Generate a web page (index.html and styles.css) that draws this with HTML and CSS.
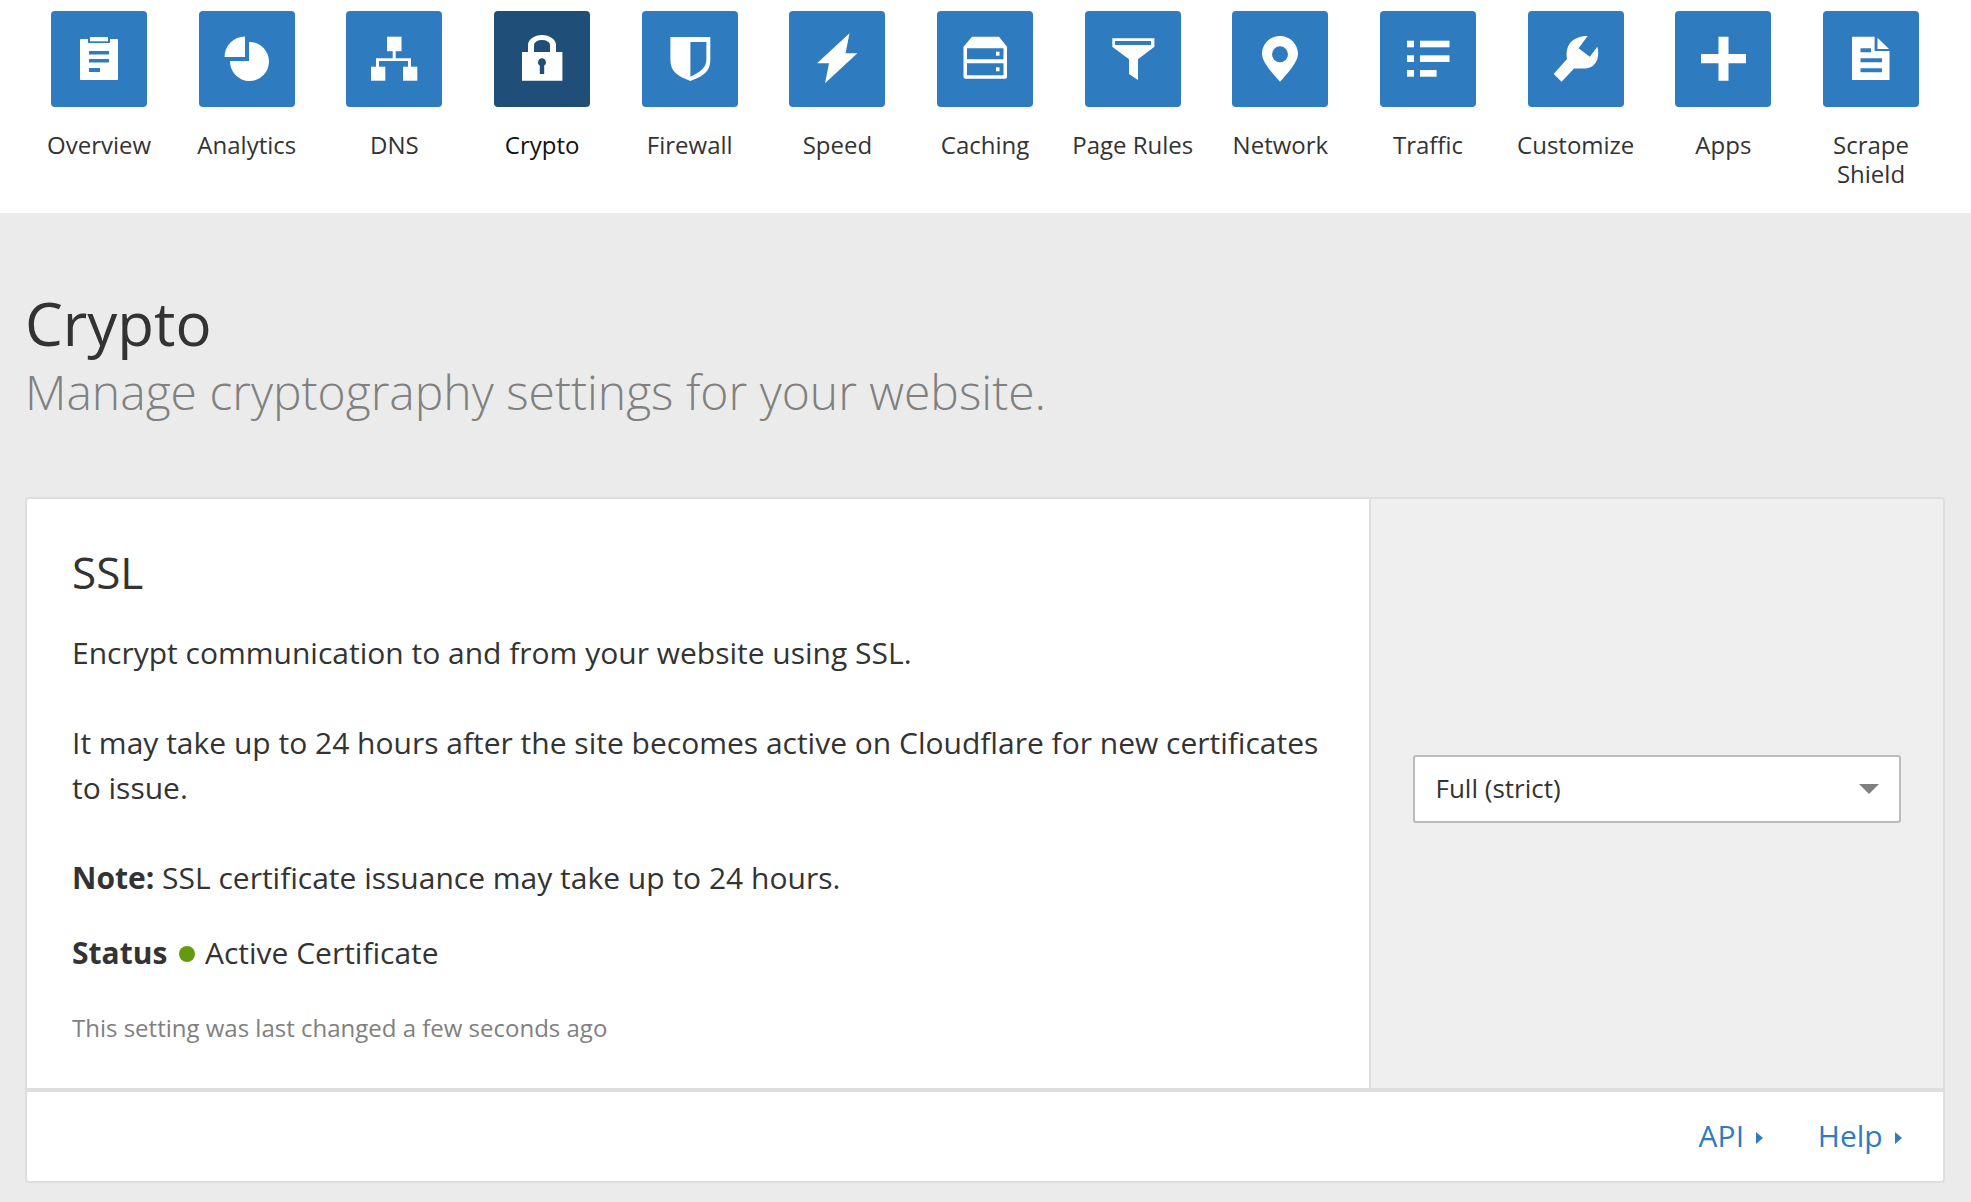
FILE: index.html
```html
<!DOCTYPE html>
<html lang="en">
  <head>
    <meta charset="UTF-8" />
    <title>Crypto</title>
    <link rel="stylesheet" href="styles.css">
  </head>
  <body>
    <nav class="apps-nav">
      <a class="app">
        <span class="tile">
          <svg viewBox="0 0 96 96"><path fill-rule="evenodd" d="M30 28h7v4h22v-4h7a1 1 0 0 1 1 1v39a1 1 0 0 1-1 1H30a1 1 0 0 1-1-1V29a1 1 0 0 1 1-1zM38 40v3.500h20V40zM38 48v3.500h20V48zM38 57v4h11v-4z"/><rect x="39" y="26" width="18" height="4.300"/></svg>
        </span>
        <span class="app-label">Overview</span>
      </a>
      <a class="app">
        <span class="tile">
          <svg viewBox="0 0 96 96"><path d="M50 31A19.500 19.500 0 1 1 31 50H50Z"/><path d="M46 25.500V46H25.500A20.500 20.500 0 0 1 46 25.500Z"/></svg>
        </span>
        <span class="app-label">Analytics</span>
      </a>
      <a class="app">
        <span class="tile">
          <svg viewBox="0 0 96 96"><rect x="41" y="25.700" width="14.500" height="14.500"/><rect x="46.700" y="40" width="3" height="8"/><path d="M30 47.300H65V56H62V50H33V56H30Z"/><rect x="25" y="55.700" width="14.300" height="14"/><rect x="57" y="55.700" width="14.300" height="14"/></svg>
        </span>
        <span class="app-label">DNS</span>
      </a>
      <a class="app is-active">
        <span class="tile">
          <svg viewBox="0 0 96 96"><path fill-rule="evenodd" d="M34 41V34A14 10 0 0 1 62 34V41H68.400V69.700H28V41ZM40 41H56V34A8 5 0 0 0 40 34ZM48 47.300A4 4 0 0 0 45.800 54.600V63H50.200V54.600A4 4 0 0 0 48 47.300Z"/></svg>
        </span>
        <span class="app-label">Crypto</span>
      </a>
      <a class="app">
        <span class="tile">
          <svg viewBox="0 0 96 96"><path fill-rule="evenodd" d="M28.400 26H68.300V49C68.300 60 62 65 48.400 70C35 65 28.400 60 28.400 49ZM48.400 31V65.700C58 61 64.400 57 64.400 48V31Z"/></svg>
        </span>
        <span class="app-label">Firewall</span>
      </a>
      <a class="app">
        <span class="tile">
          <svg viewBox="0 0 96 96"><path d="M60.500 22.300L28 52.300H40L36 72.300L68.300 42.300H56.600Z"/></svg>
        </span>
        <span class="app-label">Speed</span>
      </a>
      <a class="app">
        <span class="tile">
          <svg viewBox="0 0 96 96"><path fill-rule="evenodd" d="M35 25.700H62L70 35.700V66a1.700 1.700 0 0 1-1.700 1.700H28.200A1.700 1.700 0 0 1 26.500 66V35.700ZM30 37.300V48.300H66.500V37.300ZM30 52.300V64.300H66.500V52.300Z"/><rect x="59" y="40.700" width="3.500" height="4"/><rect x="59" y="56.300" width="3.500" height="4"/></svg>
        </span>
        <span class="app-label">Caching</span>
      </a>
      <a class="app">
        <span class="tile">
          <svg viewBox="0 0 96 96"><path fill-rule="evenodd" d="M27.300 27.300H69.400V35.700L53 48.300V69L44 63V48.300L27.300 35.700ZM30 30V34H66V30Z"/></svg>
        </span>
        <span class="app-label">Page Rules</span>
      </a>
      <a class="app">
        <span class="tile">
          <svg viewBox="0 0 96 96"><path fill-rule="evenodd" d="M48 25C58 25 66 33 66 43C66 51 55 63 48 70.700C41 63 30 51 30 43C30 33 38 25 48 25ZM48 35.300A8 8 0 1 0 48 51.300A8 8 0 1 0 48 35.300Z"/></svg>
        </span>
        <span class="app-label">Network</span>
      </a>
      <a class="app">
        <span class="tile">
          <svg viewBox="0 0 96 96"><rect x="27" y="29.700" width="7" height="6.600"/><rect x="27" y="44.300" width="7" height="6.700"/><rect x="27" y="59" width="7" height="6.700"/><rect x="40" y="29.700" width="29.500" height="6.600"/><rect x="40" y="44.300" width="29.500" height="6.700"/><rect x="40" y="59" width="16.600" height="6.700"/></svg>
        </span>
        <span class="app-label">Traffic</span>
      </a>
      <a class="app">
        <span class="tile">
          <svg viewBox="0 0 96 96"><path d="M25.700 63L39 48C37.500 39 40 31 48 27.500C52 25.500 56 25 59.700 25L50.600 37.300L61.800 45.700L69.300 35.700C72 45 69 57 57 57.400H46L33.600 70.700Z"/></svg>
        </span>
        <span class="app-label">Customize</span>
      </a>
      <a class="app">
        <span class="tile">
          <svg viewBox="0 0 96 96"><path d="M43.500 25.700H53.500V43H71V52.300H53.500V69.700H43.500V52.300H26V43H43.500Z"/></svg>
        </span>
        <span class="app-label">Apps</span>
      </a>
      <a class="app">
        <span class="tile">
          <svg viewBox="0 0 96 96"><path fill-rule="evenodd" d="M29 25.700H51.600V40H66.500V69H29ZM37.500 37.300V41.300H48V37.300ZM37.500 47.300V51.300H59V47.300ZM37.500 57.300V61.300H59V57.300Z"/><path d="M54.500 26.700L66 38H54.500Z"/></svg>
        </span>
        <span class="app-label">Scrape Shield</span>
      </a>
    </nav>

    <main class="page">
      <header class="page-head">
        <h1>Crypto</h1>
        <p class="page-sub">Manage cryptography settings for your website.</p>
      </header>

      <section class="card">
        <div class="card-body">
          <div class="card-main">
            <h2>SSL</h2>
            <p>Encrypt communication to and from your website using SSL.</p>
            <p>It may take up to 24 hours after the site becomes active on Cloudflare for new certificates to issue.</p>
            <p><strong>Note:</strong> SSL certificate issuance may take up to 24 hours.</p>
            <p class="status"><strong>Status</strong> <span class="dot"></span> Active Certificate</p>
            <p class="changed">This setting was last changed a few seconds ago</p>
          </div>
          <div class="card-side">
            <div class="select">
              <span class="select-value">Full (strict)</span>
              <span class="select-arrow"></span>
            </div>
          </div>
        </div>
        <footer class="card-foot">
          <a class="foot-link">API <span class="caret"></span></a>
          <a class="foot-link">Help <span class="caret"></span></a>
        </footer>
      </section>
    </main>
  </body>
</html>
```

FILE: styles.css
```css
/* General styles */
body {
  margin: 0;
  background-color: #ebebeb;
  color: #333;
  font-family: "Open Sans", sans-serif;
}

/* Top app navigation */
.apps-nav {
  display: grid;
  grid-template-columns: repeat(13, 147.67px);
  height: 202px;
  padding: 11px 0 0 25.3px;
  background-color: #fff;
}

.app {
  display: flex;
  flex-direction: column;
  align-items: center;
  padding: 0 10px;
  text-align: center;
}

.tile {
  width: 96px;
  height: 96px;
  flex: none;
  border-radius: 4px;
  background-color: #2f7bbf;
}

.tile svg {
  display: block;
  width: 96px;
  height: 96px;
  fill: #fff;
}

.is-active .tile {
  background-color: #1f4e79;
}

.is-active .app-label {
  color: #111;
}

.app-label {
  margin-top: 23px;
  font-size: 24px;
  line-height: 29px;
}

/* Page heading */
.page {
  padding: 0 26px 18px 25px;
}

.page-head {
  height: 284px;
  padding-top: 74px;
  box-sizing: border-box;
}

h1 {
  margin: 0;
  font-size: 60px;
  font-weight: 400;
  line-height: 72px;
}

.page-sub {
  margin: 0;
  color: #808080;
  font-size: 48px;
  font-weight: 300;
  line-height: 65px;
}

/* Card */
.card {
  box-sizing: border-box;
  height: 686px;
  display: flex;
  flex-direction: column;
  border: 2px solid #dedede;
  border-radius: 4px;
  background-color: #fff;
}

.card-body {
  display: flex;
  height: 589px;
  border-bottom: 4px solid #dedede;
}

.card-main {
  box-sizing: border-box;
  width: 1344px;
  padding: 43px 44px 0 45px;
  border-right: 2px solid #dedede;
}

h2 {
  margin: 0 0 28px;
  font-size: 44px;
  font-weight: 400;
  line-height: 60px;
}

.card-main p {
  margin: 0 0 45px;
  font-size: 30px;
  line-height: 45px;
}

.card-main .status {
  margin: -15px 0 30px;
}

.dot {
  display: inline-block;
  width: 16px;
  height: 16px;
  margin: 0 2px 0 4px;
  vertical-align: 2px;
  border-radius: 50%;
  background-color: #659a0f;
}

.card-main .changed {
  margin: 0;
  color: #808080;
  font-size: 24px;
}

.card-side {
  flex: 1;
  display: flex;
  align-items: center;
  padding: 0 42px 10px 41.500px;
  background-color: #efefef;
}

.select {
  flex: 1;
  box-sizing: border-box;
  height: 68px;
  display: flex;
  align-items: center;
  justify-content: space-between;
  padding: 0 20px 0 21px;
  border: 2px solid #bbb;
  border-radius: 3px;
  background-color: #fff;
  font-size: 26px;
}

.select-value {
  margin-bottom: 2px;
}

.select-arrow {
  width: 0;
  height: 0;
  border-left: 10px solid transparent;
  border-right: 10px solid transparent;
  border-top: 10px solid #808080;
}

.card-foot {
  flex: 1;
  display: flex;
  justify-content: flex-end;
  align-items: center;
  gap: 55px;
  padding: 0 41.500px 2px 0;
}

.foot-link {
  color: #2f7bbf;
  font-size: 30px;
  font-weight: 400;
}

.caret {
  display: inline-block;
  margin-left: 4px;
  vertical-align: 3px;
  border-top: 6.500px solid transparent;
  border-bottom: 6.500px solid transparent;
  border-left: 7.500px solid #2f7bbf;
}
```
